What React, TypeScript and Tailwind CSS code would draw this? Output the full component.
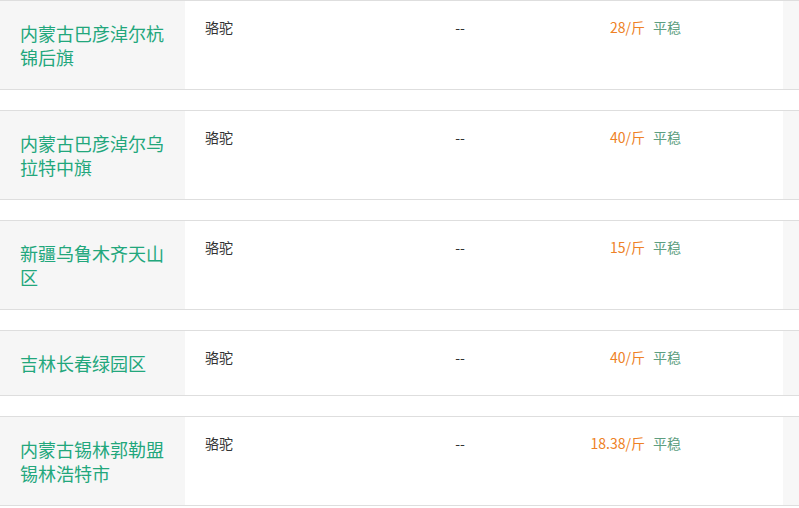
const rows = [
  { name: '内蒙古巴彦淖尔杭锦后旗', kind: '骆驼', price: '28/斤', tall: true },
  { name: '内蒙古巴彦淖尔乌拉特中旗', kind: '骆驼', price: '40/斤', tall: true },
  { name: '新疆乌鲁木齐天山区', kind: '骆驼', price: '15/斤', tall: true },
  { name: '吉林长春绿园区', kind: '骆驼', price: '40/斤', tall: false },
  { name: '内蒙古锡林郭勒盟锡林浩特市', kind: '骆驼', price: '18.38/斤', tall: true },
]

export default function App() {
  return (
    <div className="w-[799px] h-[508px] overflow-hidden bg-white font-['Noto_Sans_CJK_SC','Microsoft_YaHei',sans-serif]">
      <div className="flex flex-col gap-5">
        {rows.map((r) => (
          <div
            key={r.name}
            className={`flex border-y border-[#dedede] ${r.tall ? 'h-[90px]' : 'h-[66px]'}`}
          >
            {/* Region */}
            <div className="w-[185px] shrink-0 bg-[#f6f6f6] px-5 flex items-center">
              <span className="text-[18px] leading-[24px] text-[#22a77c]">{r.name}</span>
            </div>
            {/* Kind */}
            <div className="w-[200px] shrink-0 pl-5 pt-[16px] text-[14px] leading-[20px] text-[#333]">
              {r.kind}
            </div>
            {/* Placeholder */}
            <div className="w-[150px] shrink-0 pt-[16px] text-center text-[14px] leading-[20px] text-[#333]">
              --
            </div>
            {/* Price */}
            <div className="w-[110px] shrink-0 pt-[16px] text-right text-[14px] leading-[20px] text-[#ee8125]">
              {r.price}
            </div>
            <div className="w-[138px] shrink-0 pl-2 pt-[16px] text-[14px] leading-[20px] text-[#5e9e80]">
              平稳
            </div>
            <div className="flex-1 bg-[#f7f7f7]" />
          </div>
        ))}
      </div>
    </div>
  )
}
